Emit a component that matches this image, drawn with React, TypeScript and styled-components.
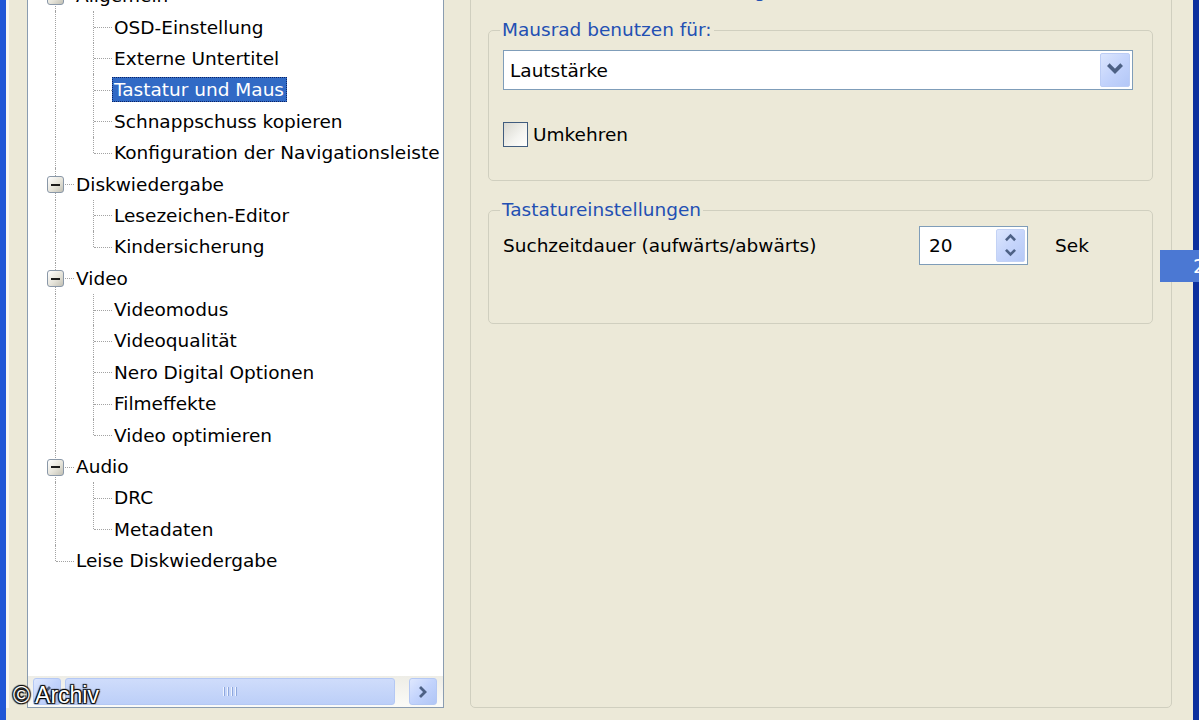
import React from "react";
import styled, { createGlobalStyle } from "styled-components";

const GlobalStyle = createGlobalStyle`
  html, body {
    margin: 0;
    padding: 0;
  }
  body {
    background: #ece9d8;
    font-family: "DejaVu Sans", Tahoma, Verdana, sans-serif;
    color: #000;
  }
`;

const Screen = styled.div`
  position: relative;
  width: 1199px;
  height: 720px;
  overflow: hidden;
  display: flex;
  background: #ece9d8;
`;

const FrameEdge = styled.div<{ $side: "left" | "right" }>`
  flex: 0 0 6px;
  background: ${(p) => (p.$side === "left" ? "#1f56d6" : "#0b2f9e")};
`;

const Client = styled.div`
  flex: 1;
  display: flex;
  align-items: stretch;
  margin-top: -30px;
  height: 738px;
  border-left: 3px solid #f8f7f0;
  padding-left: 18px;
  padding-right: 21px;
  gap: 26px;
`;

/* ---------- tree view ---------- */

const TreePanel = styled.div`
  flex: 0 0 417px;
  box-sizing: border-box;
  border: 1px solid #8a9cb0;
  background: #fff;
  display: flex;
  flex-direction: column;
  overflow: hidden;
`;

const TreeList = styled.ul`
  flex: 1;
  list-style: none;
  margin: 0;
  padding: 9px 0 0 8px;
  overflow: hidden;
  font-size: 18.5px;
`;

const TreeRow = styled.li`
  display: flex;
  align-items: center;
  height: 31.4px;
  white-space: nowrap;
`;

type GuideKind = "tee" | "ell" | "pipe";

const Guide = styled.span<{ $kind: GuideKind }>`
  position: relative;
  flex: 0 0 38px;
  align-self: stretch;

  &::before {
    content: "";
    position: absolute;
    left: 19px;
    top: 0;
    height: ${(p) => (p.$kind === "ell" ? "50%" : "100%")};
    border-left: 1px dotted #a3a3a3;
  }

  &::after {
    content: ${(p) => (p.$kind === "pipe" ? "none" : '""')};
    position: absolute;
    left: 20px;
    right: 0;
    top: 50%;
    border-top: 1px dotted #a3a3a3;
  }
`;

const Expander = styled.span`
  position: absolute;
  z-index: 1;
  left: 11px;
  top: 50%;
  width: 17px;
  height: 17px;
  margin-top: -8px;
  box-sizing: border-box;
  border: 1px solid #8a98a8;
  border-radius: 3px;
  background: linear-gradient(135deg, #ffffff 0%, #e6e4da 55%, #c2c0b4 100%);
  display: flex;
  align-items: center;
  justify-content: center;

  &::before {
    content: "";
    width: 9px;
    height: 2px;
    background: #1b1b1b;
  }
`;

const NodeLabel = styled.span<{ $selected?: boolean }>`
  display: inline-block;
  padding: 0 2px 0 1px;
  line-height: 23px;
  border: 1px ${(p) => (p.$selected ? "dotted #0c2466" : "solid transparent")};
  background: ${(p) => (p.$selected ? "#316ac5" : "transparent")};
  color: ${(p) => (p.$selected ? "#fff" : "#000")};
`;

const HScroll = styled.div`
  flex: 0 0 31px;
  display: flex;
  align-items: center;
  padding: 0 6px 0 5px;
  background: linear-gradient(#eeede6, #fbfbf8);
`;

const ScrollButton = styled.div<{ $push?: boolean }>`
  width: 28px;
  height: 27px;
  box-sizing: border-box;
  margin-left: ${(p) => (p.$push ? "auto" : "0")};
  border: 1px solid #b4c8f4;
  border-radius: 3px;
  background: linear-gradient(135deg, #dfe8fe 0%, #c2d3fc 50%, #b0c6f6 100%);
  display: flex;
  align-items: center;
  justify-content: center;
`;

const Thumb = styled.div`
  width: 330px;
  height: 27px;
  margin-left: 4px;
  box-sizing: border-box;
  border: 1px solid #b4c8f4;
  border-radius: 3px;
  background: linear-gradient(#cfdcfb, #bccff8);
  display: flex;
  align-items: center;
  justify-content: center;
  gap: 2px;
`;

const Grip = styled.span`
  width: 1px;
  height: 9px;
  background: #eef3fe;
  box-shadow: 1px 0 0 #8ea8de;
  margin-right: 1px;
`;

/* ---------- option panel ---------- */

const GroupBox = styled.fieldset<{ $outer?: boolean }>`
  margin: ${(p) => (p.$outer ? "10px 0 0" : "0")};
  min-width: 0;
  box-sizing: border-box;
  border: 1px solid #d0cfbf;
  border-radius: 5px;
  padding: ${(p) => (p.$outer ? "17px 18px 0 17px" : "0 19px 0 14px")};
  flex: ${(p) => (p.$outer ? "0 0 702px" : "none")};
  display: ${(p) => (p.$outer ? "flex" : "block")};
  flex-direction: column;
`;

const GroupTitle = styled.legend`
  margin-left: -3px;
  padding: 0 2px;
  font-size: 18.5px;
  line-height: 22px;
  color: #2350b3;
`;

const GroupBody = styled.div<{ $top: number; $bottom: number }>`
  padding-top: ${(p) => p.$top}px;
  padding-bottom: ${(p) => p.$bottom}px;
  font-size: 18.5px;
`;

const Stack = styled.div`
  display: flex;
  flex-direction: column;
  gap: 18px;
`;

const Combo = styled.div`
  height: 40px;
  box-sizing: border-box;
  border: 1px solid #7f9db9;
  background: #fff;
  display: flex;
  align-items: center;
  padding: 0 2px 0 6px;
`;

const ComboText = styled.span`
  flex: 1;
`;

const DropButton = styled.div`
  width: 30px;
  height: 34px;
  box-sizing: border-box;
  border: 1px solid #bccdf5;
  border-radius: 2px;
  background: linear-gradient(135deg, #dce6fd 0%, #c4d4fc 50%, #b3c7f7 100%);
  display: flex;
  align-items: center;
  justify-content: center;
`;

const CheckRow = styled.label`
  display: flex;
  align-items: center;
  gap: 5px;
  margin-top: 32px;
  height: 25px;
`;

const CheckBox = styled.span`
  width: 25px;
  height: 25px;
  box-sizing: border-box;
  border: 1px solid #405c7e;
  background: linear-gradient(135deg, #d9d8d0 0%, #f4f4f0 60%, #ffffff 100%);
`;

const SettingRow = styled.div`
  display: grid;
  grid-template-columns: 416px 109px 1fr;
  align-items: center;
`;

const Spin = styled.div`
  height: 39px;
  box-sizing: border-box;
  border: 1px solid #7f9db9;
  background: #fff;
  display: flex;
  align-items: center;
  padding: 0 2px 0 9px;
`;

const SpinValue = styled.span`
  flex: 1;
`;

const SpinButtons = styled.div`
  width: 29px;
  height: 33px;
  box-sizing: border-box;
  border: 1px solid #c3d2f5;
  border-radius: 2px;
  background: linear-gradient(135deg, #dce6fd 0%, #c6d5fb 50%, #b6c9f7 100%);
  display: flex;
  flex-direction: column;
  align-items: center;
  justify-content: center;
  gap: 5px;
`;

const Unit = styled.span`
  padding-left: 27px;
`;

/* ---------- overlays ---------- */

const Watermark = styled.div`
  position: absolute;
  left: 13px;
  top: 682px;
  font-family: "Liberation Sans", Arial, sans-serif;
  font-size: 23px;
  color: #fff;
  text-shadow: 1px 1px 1px #000, -1px -1px 1px #000, 1px -1px 1px #000,
    -1px 1px 1px #000;
`;

const SideTab = styled.div`
  position: absolute;
  left: 1160px;
  top: 250px;
  width: 40px;
  height: 32px;
  background: #4b78d3;
  color: #fff;
  font-size: 20px;
  line-height: 32px;
  padding-left: 33px;
  box-sizing: border-box;
`;

const Chevron = ({ dir, size = 12 }: { dir: "down" | "up" | "left" | "right"; size?: number }) => {
  const paths = {
    down: "M2 3 L6 7 L10 3",
    up: "M2 8 L6 4 L10 8",
    left: "M8 2 L4 6 L8 10",
    right: "M4 2 L8 6 L4 10",
  };
  return (
    <svg width={size} height={size} viewBox="0 0 12 12">
      <path d={paths[dir]} fill="none" stroke="#4d6185" strokeWidth={2.8} strokeLinecap="square" />
    </svg>
  );
};

type Node = {
  label: string;
  child?: boolean;
  parent?: boolean;
  last?: boolean;
  selected?: boolean;
};

const nodes: Node[] = [
  { label: "Allgemein", parent: true },
  { label: "OSD-Einstellung", child: true },
  { label: "Externe Untertitel", child: true },
  { label: "Tastatur und Maus", child: true, selected: true },
  { label: "Schnappschuss kopieren", child: true },
  { label: "Konfiguration der Navigationsleiste", child: true, last: true },
  { label: "Diskwiedergabe", parent: true },
  { label: "Lesezeichen-Editor", child: true },
  { label: "Kindersicherung", child: true, last: true },
  { label: "Video", parent: true },
  { label: "Videomodus", child: true },
  { label: "Videoqualität", child: true },
  { label: "Nero Digital Optionen", child: true },
  { label: "Filmeffekte", child: true },
  { label: "Video optimieren", child: true, last: true },
  { label: "Audio", parent: true },
  { label: "DRC", child: true },
  { label: "Metadaten", child: true, last: true },
  { label: "Leise Diskwiedergabe", last: true },
];

const Tree = () => (
  <TreePanel>
    <TreeList>
      {nodes.map((n) => (
        <TreeRow key={n.label}>
          {n.child ? (
            <>
              <Guide $kind="pipe" />
              <Guide $kind={n.last ? "ell" : "tee"} />
            </>
          ) : (
            <Guide $kind={n.last ? "ell" : "tee"}>{n.parent && <Expander />}</Guide>
          )}
          <NodeLabel $selected={n.selected}>{n.label}</NodeLabel>
        </TreeRow>
      ))}
    </TreeList>
    <HScroll>
      <ScrollButton>
        <Chevron dir="left" />
      </ScrollButton>
      <Thumb>
        <Grip />
        <Grip />
        <Grip />
        <Grip />
      </Thumb>
      <ScrollButton $push>
        <Chevron dir="right" />
      </ScrollButton>
    </HScroll>
  </TreePanel>
);

const Options = () => (
  <GroupBox $outer>
    <GroupTitle>Tastatur und Maus-Einstellungen</GroupTitle>
    <Stack>
      <GroupBox>
        <GroupTitle>Mausrad benutzen für:</GroupTitle>
        <GroupBody $top={9} $bottom={33}>
          <Combo>
            <ComboText>Lautstärke</ComboText>
            <DropButton>
              <Chevron dir="down" size={16} />
            </DropButton>
          </Combo>
          <CheckRow>
            <CheckBox />
            Umkehren
          </CheckRow>
        </GroupBody>
      </GroupBox>
      <GroupBox>
        <GroupTitle>Tastatureinstellungen</GroupTitle>
        <GroupBody $top={5} $bottom={58}>
          <SettingRow>
            <span>Suchzeitdauer (aufwärts/abwärts)</span>
            <Spin>
              <SpinValue>20</SpinValue>
              <SpinButtons>
                <Chevron dir="up" size={11} />
                <Chevron dir="down" size={11} />
              </SpinButtons>
            </Spin>
            <Unit>Sek</Unit>
          </SettingRow>
        </GroupBody>
      </GroupBox>
    </Stack>
  </GroupBox>
);

export default function App() {
  return (
    <>
      <GlobalStyle />
      <Screen>
        <FrameEdge $side="left" />
        <Client>
          <Tree />
          <Options />
        </Client>
        <FrameEdge $side="right" />
        <SideTab>2</SideTab>
        <Watermark>© Archiv</Watermark>
      </Screen>
    </>
  );
}
